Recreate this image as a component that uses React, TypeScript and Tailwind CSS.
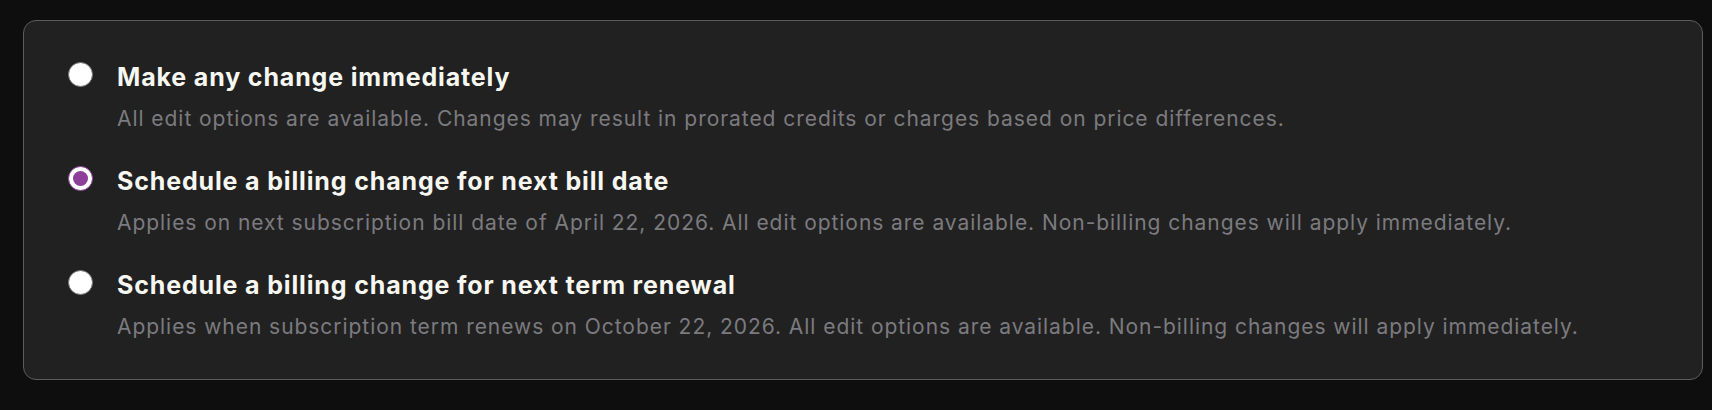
const options = [
  {
    id: 'immediate',
    title: 'Make any change immediately',
    description:
      'All edit options are available. Changes may result in prorated credits or charges based on price differences.',
  },
  {
    id: 'next-bill',
    title: 'Schedule a billing change for next bill date',
    description:
      'Applies on next subscription bill date of April 22, 2026. All edit options are available. Non-billing changes will apply immediately.',
  },
  {
    id: 'term-renewal',
    title: 'Schedule a billing change for next term renewal',
    description:
      'Applies when subscription term renews on October 22, 2026. All edit options are available. Non-billing changes will apply immediately.',
  },
];

function Radio({ checked }: { checked: boolean }) {
  if (checked) {
    return (
      <span className="flex h-[25px] w-[25px] shrink-0 items-center justify-center rounded-full border-[1.5px] border-[#8d3f99] bg-white">
        <span className="h-[15px] w-[15px] rounded-full bg-[#8d3f99]" />
      </span>
    );
  }
  return (
    <span className="block h-[25px] w-[25px] shrink-0 rounded-full border-[1.5px] border-[#707070] bg-white" />
  );
}

export default function App() {
  const selected = 'next-bill';

  return (
    <div className="h-[410px] bg-[#0e0e0e] pl-[23px] pt-[20px] font-['Inter',sans-serif]">
      <div className="h-[360px] w-[1680px] rounded-[13px] border border-[#5c5c58] bg-[#222121] pl-[44px] pt-[40px]">
        <div className="flex flex-col gap-[32px]">
          {options.map((opt) => (
            <label key={opt.id} className="flex items-start gap-[24px]">
              <span className="mt-[1px]">
                <Radio checked={opt.id === selected} />
              </span>
              <span className="flex flex-col">
                <span className="text-[25px] font-bold leading-[32px] tracking-[0.85px] text-[#f7f7f2]">
                  {opt.title}
                </span>
                <span className="mt-[12px] text-[21px] leading-[28px] tracking-[0.95px] text-[#7b7b7f]">
                  {opt.description}
                </span>
              </span>
            </label>
          ))}
        </div>
      </div>
    </div>
  );
}
